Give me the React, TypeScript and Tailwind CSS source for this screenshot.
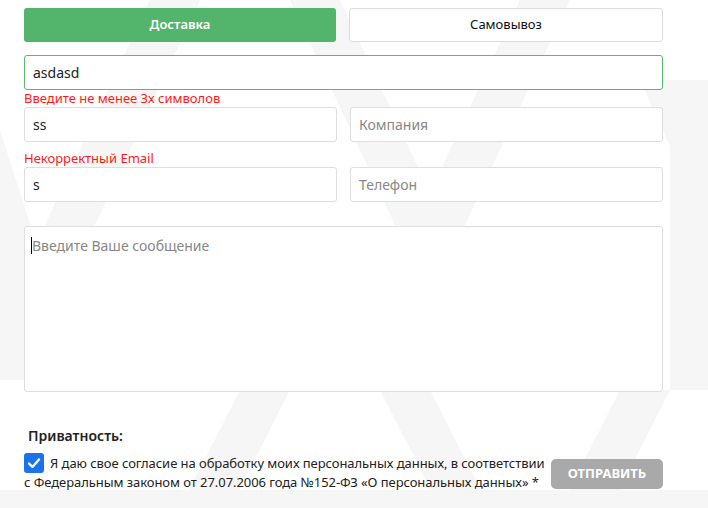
import React from "react";

export default function App() {
  const font = { fontFamily: '"Noto Sans", "Open Sans", sans-serif' };
  return (
    <div className="relative w-[708px] h-[508px] overflow-hidden bg-white" style={font}>
      <svg className="absolute inset-0" width="708" height="508" viewBox="0 0 708 508">
        <g fill="#f6f6f6">
          <polygon points="150,0 200,0 60,300 10,300" />
          <polygon points="290,0 340,0 480,300 430,300" />
          <polygon points="520,0 570,0 430,300 380,300" />
          <polygon points="0,130 0,380 80,380" />
          <polygon points="670,130 708,130 708,390 670,390" />
          <polygon points="0,490 708,490 708,508 0,508" />
          <polygon points="640,80 708,80 708,230" />
          <polygon points="240,390 290,390 230,508 180,508" />
          <polygon points="380,390 430,390 490,508 440,508" />
          <polygon points="620,390 670,390 610,508 560,508" />
        </g>
      </svg>
      <div className="relative pl-[24px] pr-[45px] pt-[8px] flex flex-col">
        <div className="flex gap-[13px]">
          <button className="flex-1 h-[34px] rounded-[3px] bg-[#53b46c] text-white text-[13px] font-semibold">
            Доставка
          </button>
          <button className="flex-1 h-[34px] rounded-[3px] bg-white border border-[#dcdcdc] text-[#111] text-[13px]">
            Самовывоз
          </button>
        </div>
        <div className="mt-[13px] h-[35px] rounded-[3px] border border-[#5cb86c] bg-white flex items-center px-[8px] text-[14px] text-[#222]">
          asdasd
        </div>
        <div className="text-[#ff1a1a] text-[13px] leading-[17px]">Введите не менее 3х символов</div>
        <div className="flex gap-[13px]">
          <div className="flex-1 h-[35px] rounded-[3px] border border-[#dedede] bg-white flex items-center px-[8px] text-[14px] text-[#222]">
            ss
          </div>
          <div className="flex-1 h-[35px] rounded-[3px] border border-[#dedede] bg-white flex items-center px-[8px] text-[14px] text-[#888]">
            Компания
          </div>
        </div>
        <div className="text-[#ff1a1a] text-[13px] leading-[17px] mt-[8px]">Некорректный Email</div>
        <div className="flex gap-[13px]">
          <div className="flex-1 h-[35px] rounded-[3px] border border-[#dedede] bg-white flex items-center px-[8px] text-[14px] text-[#222]">
            s
          </div>
          <div className="flex-1 h-[35px] rounded-[3px] border border-[#dedede] bg-white flex items-center px-[8px] text-[14px] text-[#888]">
            Телефон
          </div>
        </div>
        <div className="mt-[24px] h-[166px] rounded-[3px] border border-[#dedede] bg-white px-[6px] pt-[10px] text-[14px] text-[#888] flex items-start">
          <span className="inline-block w-[1px] h-[17px] bg-black" />
          <span className="leading-[17px]">Введите Ваше сообщение</span>
        </div>
        <div className="mt-[34px] pl-[4px] text-[14px] font-semibold text-[#222] leading-[20px]">Приватность:</div>
        <div className="mt-[7px] flex items-start">
          <div className="flex-1 text-[13px] leading-[19px] text-[#222] tracking-[-0.06px] whitespace-nowrap">
            <div className="flex items-center">
              <span className="flex w-[20px] h-[20px] rounded-[3px] bg-[#1a73e8] items-center justify-center mr-[6px]">
                <svg width="14" height="14" viewBox="0 0 14 14">
                  <path d="M2 7.5 L5.5 11 L12 3.5" stroke="white" strokeWidth="2.4" fill="none" strokeLinecap="round" strokeLinejoin="round" />
                </svg>
              </span>
              <span>Я даю свое согласие на обработку моих персональных данных, в соответствии</span>
            </div>
            <div>с Федеральным законом от 27.07.2006 года №152-ФЗ «О персональных данных» *</div>
          </div>
          <button className="ml-[4px] mt-[6px] w-[112px] h-[30px] rounded-[5px] bg-[#a9a9a9] text-white text-[13px] font-bold">
            ОТПРАВИТЬ
          </button>
        </div>
      </div>
    </div>
  );
}
